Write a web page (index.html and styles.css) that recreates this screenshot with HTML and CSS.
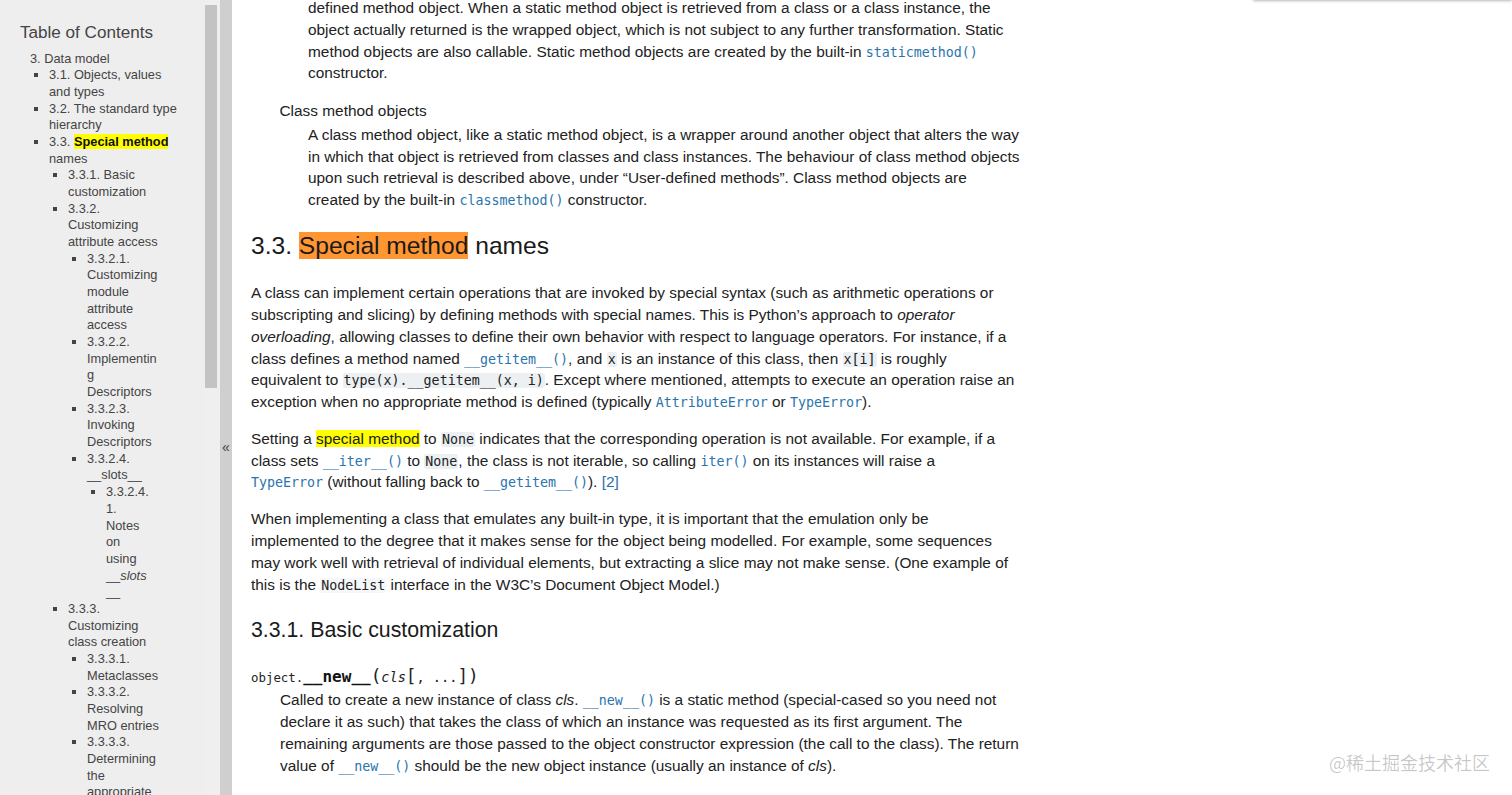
FILE: index.html
```html
<!DOCTYPE html>
<html lang="en">
<head>
<meta charset="utf-8">
<title>3. Data model</title>
<link rel="stylesheet" href="styles.css">
</head>
<body>
<div class="page">
  <aside class="sidebar">
    <div class="sidebar-inner">
      <h3 class="toc-title">Table of Contents</h3>
      <ul class="toc">
        <li>3. Data model
          <ul>
            <li>3.1. Objects, values and types</li>
            <li>3.2. The standard type hierarchy</li>
            <li>3.3. <span class="hl-bold">Special method</span> names
              <ul>
                <li>3.3.1. Basic customization</li>
                <li>3.3.2. Customizing attribute access
                  <ul>
                    <li>3.3.2.1. Customizing module attribute access</li>
                    <li>3.3.2.2. Implementing Descriptors</li>
                    <li>3.3.2.3. Invoking Descriptors</li>
                    <li>3.3.2.4. __slots__
                      <ul>
                        <li>3.3.2.4.1. Notes on using __<em>slots</em>__</li>
                      </ul>
                    </li>
                  </ul>
                </li>
                <li>3.3.3. Customizing class creation
                  <ul>
                    <li>3.3.3.1. Metaclasses</li>
                    <li>3.3.3.2. Resolving MRO entries</li>
                    <li>3.3.3.3. Determining the appropriate metaclass</li>
                  </ul>
                </li>
              </ul>
            </li>
          </ul>
        </li>
      </ul>
    </div>
    <div class="scrollbar"><div class="thumb"></div></div>
  </aside>
  <div class="collapse"><span class="collapse-glyph">«</span></div>
  <main class="main">
    <div class="content">
      <dl class="desc">
        <dd>
          <dl class="desc">
            <dd>
              <p>defined method object. When a static method object is retrieved from a class or a class instance, the<br>object actually returned is the wrapped object, which is not subject to any further transformation. Static<br>method objects are also callable. Static method objects are created by the built-in <a class="xref">staticmethod()</a><br>constructor.</p>
            </dd>
            <dt>Class method objects</dt>
            <dd>
              <p>A class method object, like a static method object, is a wrapper around another object that alters the way<br>in which that object is retrieved from classes and class instances. The behaviour of class method objects<br>upon such retrieval is described above, under “User-defined methods”. Class method objects are<br>created by the built-in <a class="xref">classmethod()</a> constructor.</p>
            </dd>
          </dl>
        </dd>
      </dl>

      <h2 class="section-title">3.3. <span class="hl-orange">Special method</span> names</h2>

      <p>A class can implement certain operations that are invoked by special syntax (such as arithmetic operations or<br>subscripting and slicing) by defining methods with special names. This is Python’s approach to <em>operator</em><br><em>overloading</em>, allowing classes to define their own behavior with respect to language operators. For instance, if a<br>class defines a method named <a class="xref">__getitem__()</a>, and <code class="lit">x</code> is an instance of this class, then <code class="lit">x[i]</code> is roughly<br>equivalent to <code class="lit">type(x).__getitem__(x, i)</code>. Except where mentioned, attempts to execute an operation raise an<br>exception when no appropriate method is defined (typically <a class="xref">AttributeError</a> or <a class="xref">TypeError</a>).</p>

      <p>Setting a <span class="hl-yellow">special method</span> to <code class="lit">None</code> indicates that the corresponding operation is not available. For example, if a<br>class sets <a class="xref">__iter__()</a> to <code class="lit">None</code>, the class is not iterable, so calling <a class="xref">iter()</a> on its instances will raise a<br><a class="xref">TypeError</a> (without falling back to <a class="xref">__getitem__()</a>). <a class="ref">[2]</a></p>

      <p>When implementing a class that emulates any built-in type, it is important that the emulation only be<br>implemented to the degree that it makes sense for the object being modelled. For example, some sequences<br>may work well with retrieval of individual elements, but extracting a slice may not make sense. (One example of<br>this is the <code class="lit plain">NodeList</code> interface in the W3C’s Document Object Model.)</p>

      <h3 class="subsection-title">3.3.1. Basic customization</h3>

      <dl class="method">
        <dt class="sig"><span class="sig-prefix">object.</span><span class="sig-name">__new__</span><span class="sig-paren">(</span><em class="sig-arg">cls</em><span class="sig-opt">[</span>, ...<span class="sig-opt">]</span><span class="sig-paren">)</span></dt>
        <dd>
          <p>Called to create a new instance of class <em>cls</em>. <a class="xref">__new__()</a> is a static method (special-cased so you need not<br>declare it as such) that takes the class of which an instance was requested as its first argument. The<br>remaining arguments are those passed to the object constructor expression (the call to the class). The return<br>value of <a class="xref">__new__()</a> should be the new object instance (usually an instance of <em>cls</em>).</p>
        </dd>
      </dl>
    </div>
  </main>
</div>
<div class="top-shadow"></div>
<div class="watermark">@稀土掘金技术社区</div>
</body>
</html>
```

FILE: styles.css
```css
html, body {
  margin: 0;
  padding: 0;
  height: 795px;
  overflow: hidden;
  background: #ffffff;
}

body {
  font-family: "Liberation Sans", Arial, sans-serif;
  color: #222222;
}

.page {
  display: flex;
  height: 795px;
}

/* ---------- sidebar ---------- */
.sidebar {
  flex: 0 0 220px;
  display: flex;
  background: #eeeeee;
  overflow: hidden;
}

.sidebar-inner {
  width: 205px;
  flex: 0 0 205px;
  box-sizing: border-box;
  padding: 23px 14.5px 0 20px;
  color: #444444;
  font-size: 12.8px;
  line-height: 16.67px;
  overflow-wrap: break-word;
}

.toc-title {
  margin: 0;
  font-size: 17.1px;
  line-height: 20.5px;
  font-weight: normal;
  color: #444444;
}

.toc {
  list-style: none;
  margin: 7.2px 0 0 10px;
  padding: 0;
}

.toc ul {
  list-style: square;
  margin: 0 10px 0 0;
  padding: 0 0 0 19px;
}

.toc li {
  margin: 0;
}

.hl-bold {
  background: #ffff00;
  color: #111111;
  font-weight: bold;
}

.scrollbar {
  flex: 0 0 15px;
  background: #efefef;
  padding-top: 5px;
  box-sizing: border-box;
}

.thumb {
  width: 12px;
  height: 383px;
  background: #c3c3c3;
}

.collapse {
  flex: 0 0 12px;
  background: #cfcfcf;
  display: flex;
  justify-content: center;
  align-items: flex-start;
  padding-top: 439px;
  box-sizing: border-box;
}

.collapse-glyph {
  font-size: 14px;
  line-height: 16px;
  color: #444444;
}

/* ---------- main ---------- */
.main {
  flex: 1 1 auto;
  overflow: hidden;
}

.content {
  width: 800px;
  margin: -3px 0 0 19px;
  font-size: 15.4px;
  line-height: 21.75px;
}

.content p {
  margin: 0 0 15.2px 0;
}

dl.desc dd > p {
  margin-bottom: 16px;
}

dl.desc, dl.method {
  margin: 0;
}

dl.desc dd {
  margin: 0 0 0 28.5px;
}

dl.desc dt {
  margin: 0;
  font-weight: normal;
}

dl.desc dt + dd {
  margin-top: 2px;
}

dl.method dd {
  margin: 1px 0 0 29px;
}

.section-title {
  margin: 20px 0 22px 0;
  font-size: 24.6px;
  line-height: 29.5px;
  font-weight: normal;
  color: #1a1a1a;
}

.hl-orange {
  background: #ff9632;
}

.hl-yellow {
  background: #ffff00;
}

.subsection-title {
  margin: 22.3px 0 23.3px 0;
  font-size: 21.3px;
  line-height: 25.6px;
  font-weight: normal;
  color: #1a1a1a;
}

a.xref {
  font-family: "DejaVu Sans Mono", "Liberation Mono", monospace;
  font-size: 13.3px;
  line-height: 1;
  color: #2a74ad;
  text-decoration: none;
}

a.ref {
  color: #2a70a8;
  text-decoration: none;
}

code.lit {
  font-family: "DejaVu Sans Mono", "Liberation Mono", monospace;
  font-size: 13.3px;
  line-height: 1;
  color: #222222;
  background: #ecf0f3;
  padding: 0 1px;
  border-radius: 2px;
}

code.plain {
  background: #f5f7f9;
}

dt.sig {
  font-family: "DejaVu Sans Mono", "Liberation Mono", monospace;
  font-size: 13.6px;
  line-height: 21.75px;
  color: #222222;
}

.sig-prefix {
  font-size: 12.4px;
}

.sig-name {
  font-size: 16px;
  line-height: 1;
  font-weight: bold;
  color: #111111;
}

.sig-arg {
  font-style: italic;
}

.sig-opt, .sig-paren {
  font-size: 1.3em;
  line-height: 1;
}

/* ---------- overlays ---------- */
.top-shadow {
  position: absolute;
  top: -8px;
  left: 1253px;
  right: 0;
  height: 8px;
  background: #ffffff;
  box-shadow: 0 1px 3px rgba(0, 0, 0, 0.28);
}

.watermark {
  position: absolute;
  right: 22px;
  bottom: 22px;
  font-family: "Noto Sans CJK SC", "Liberation Sans", sans-serif;
  font-size: 18px;
  line-height: 22px;
  color: rgba(0, 0, 0, 0.22);
  text-shadow: 0 0 1px rgba(255, 255, 255, 0.9);
}
```
